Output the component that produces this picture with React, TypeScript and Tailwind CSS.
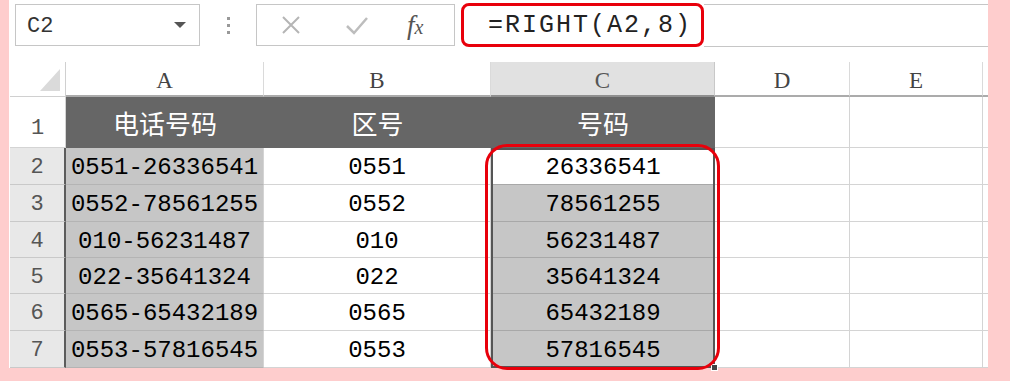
import React from 'react';

const mono = "font-['Liberation_Mono','Noto_Sans_CJK_SC',monospace]";
const serif = "font-['Liberation_Serif',serif]";

const data = [
  ['0551-26336541', '0551', '26336541'],
  ['0552-78561255', '0552', '78561255'],
  ['010-56231487', '010', '56231487'],
  ['022-35641324', '022', '35641324'],
  ['0565-65432189', '0565', '65432189'],
  ['0553-57816545', '0553', '57816545'],
];

const rowHeights = ['h-[37px]', 'h-[37px]', 'h-[36px]', 'h-[36px]', 'h-[37px]', 'h-[37px]'];

export default function App() {
  return (
    <div className="w-[1010px] h-[381px] bg-[#fecdcd] pl-[9px] pr-[22px] overflow-hidden">
      <div className="bg-white h-[368px] flex flex-col">
        {/* Formula bar */}
        <div className="h-[62px] flex items-start pt-[3px] pl-[6px] shrink-0">
          <div className="mt-[1px] w-[185px] h-[42px] border border-[#c6c6c6] flex items-center justify-between pl-[11px] pr-[13px]">
            <span className={`${mono} text-[22px] text-[#333] pt-[2px]`}>C2</span>
            <svg width="12" height="7" viewBox="0 0 12 7">
              <polygon points="0,0 12,0 6,6" fill="#555" />
            </svg>
          </div>
          <div className="w-[56px] h-[44px] flex flex-col items-center justify-center gap-[4px]">
            <span className="w-[3px] h-[3px] bg-[#999]" />
            <span className="w-[3px] h-[3px] bg-[#999]" />
            <span className="w-[3px] h-[3px] bg-[#999]" />
          </div>
          <div className="mt-[1px] w-[199px] h-[42px] border border-[#c6c6c6] flex items-center">
            <svg className="ml-[23px]" width="22" height="22" viewBox="0 0 22 22">
              <path d="M3 3 L19 19 M19 3 L3 19" stroke="#b5b5b5" strokeWidth="2" />
            </svg>
            <svg className="ml-[43px]" width="24" height="22" viewBox="0 0 24 22">
              <path d="M2 12 L9 19 L22 4" stroke="#bdbdbd" strokeWidth="2.5" fill="none" />
            </svg>
            <span className={`ml-[38px] ${serif} italic text-[#555] leading-none`}>
              <span className="text-[27px]">f</span>
              <span className="text-[20px]">x</span>
            </span>
          </div>
          <div className="ml-[6px] flex-1 flex">
            <div className="w-[243px] h-[44px] border-[3px] border-[#e8000b] rounded-[8px] flex items-center pl-[24px]">
              <span className={`${mono} text-[25px] text-[#222] tracking-[2px] pt-[2px]`}>=RIGHT(A2,8)</span>
            </div>
            <div className="flex-1 h-[43px] mt-[1px] border-y border-[#c6c6c6]" />
          </div>
        </div>

        {/* Sheet */}
        <div className="relative pl-[1px]">
          {/* column headers */}
          <div className="flex h-[35px]">
            <div className="relative w-[56px] border-b border-r border-[#d0d0d0]">
              <svg className="absolute right-[5px] bottom-[5px]" width="20" height="22" viewBox="0 0 20 22">
                <polygon points="20,0 20,22 0,22" fill="#dadada" />
              </svg>
            </div>
            {[
              ['A', 'w-[198px]'],
              ['B', 'w-[227px]'],
            ].map(([l, w]) => (
              <div key={l} className={`${w} border-r border-[#dadada] border-b-2 border-b-[#ababab] flex items-center justify-center pt-[6px] ${serif} text-[23px] text-[#444]`}>
                {l}
              </div>
            ))}
            <div className={`w-[224px] bg-[#e1e1e1] border-r border-[#c8c8c8] border-b-2 border-b-[#8f8f8f] flex items-center justify-center pt-[6px] ${serif} text-[23px] text-[#555]`}>
              C
            </div>
            {[
              ['D', 'w-[135px]'],
              ['E', 'w-[133px]'],
            ].map(([l, w]) => (
              <div key={l} className={`${w} border-r border-[#dadada] border-b-2 border-b-[#ababab] flex items-center justify-center pt-[6px] ${serif} text-[23px] text-[#444]`}>
                {l}
              </div>
            ))}
            <div className="flex-1 border-b-2 border-b-[#ababab]" />
          </div>

          {/* row 1 */}
          <div className="flex h-[51px]">
            <div className={`w-[56px] border-b border-r border-[#d4d4d4] flex items-end justify-center pb-[7px] leading-none ${mono} text-[22px] text-[#555]`}>
              1
            </div>
            <div className="w-[198px] bg-[#666] flex items-center justify-center font-['Noto_Sans_CJK_SC',sans-serif] text-[26px] text-white">
              电话号码
            </div>
            <div className="w-[227px] bg-[#666] flex items-center justify-center font-['Noto_Sans_CJK_SC',sans-serif] text-[26px] text-white">
              区号
            </div>
            <div className="w-[224px] bg-[#666] flex items-center justify-center font-['Noto_Sans_CJK_SC',sans-serif] text-[26px] text-white">
              号码
            </div>
            <div className="w-[135px] border-b border-r border-[#d4d4d4]" />
            <div className="w-[133px] border-b border-r border-[#d4d4d4]" />
            <div className="flex-1 border-b border-[#d4d4d4]" />
          </div>

          {/* data rows */}
          {data.map((r, i) => (
            <div key={i} className={`flex ${rowHeights[i]}`}>
              <div className={`w-[56px] bg-[#e8e8e8] border-b border-b-[#c9c9c9] border-r-2 border-r-[#5c5c5c] flex items-center justify-center pt-[3px] ${mono} text-[22px] text-[#555]`}>
                {i + 2}
              </div>
              <div className={`w-[198px] bg-[#c6c6c6] border-b border-b-[#b4b4b4] border-r border-r-[#d4d4d4] flex items-center justify-center pt-[4px] ${mono} text-[24px] text-black`}>
                {r[0]}
              </div>
              <div className={`w-[227px] border-b border-r border-[#d4d4d4] flex items-center justify-center pt-[4px] ${mono} text-[24px] text-black`}>
                {r[1]}
              </div>
              <div className={`w-[224px] ${i === 0 ? 'bg-white' : 'bg-[#c6c6c6]'} border-b border-[#a8a8a8] flex items-center justify-center pt-[4px] ${mono} text-[24px] text-black`}>
                {r[2]}
              </div>
              <div className="w-[135px] border-b border-r border-[#d4d4d4]" />
              <div className="w-[133px] border-b border-r border-[#d4d4d4]" />
              <div className="flex-1 border-b border-[#d4d4d4]" />
            </div>
          ))}

          {/* selection C2:C7 */}
          <div className="absolute left-[482px] top-[86px] w-[224px] h-[220px] border-2 border-[#555] pointer-events-none">
            <div className="absolute -right-[5px] -bottom-[5px] w-[7px] h-[7px] bg-[#444] border border-white" />
          </div>

          {/* red annotation */}
          <div className="absolute left-[476px] top-[82px] w-[235px] h-[226px] border-[3px] border-[#e8000b] rounded-[22px] pointer-events-none" />
        </div>
      </div>
    </div>
  );
}
